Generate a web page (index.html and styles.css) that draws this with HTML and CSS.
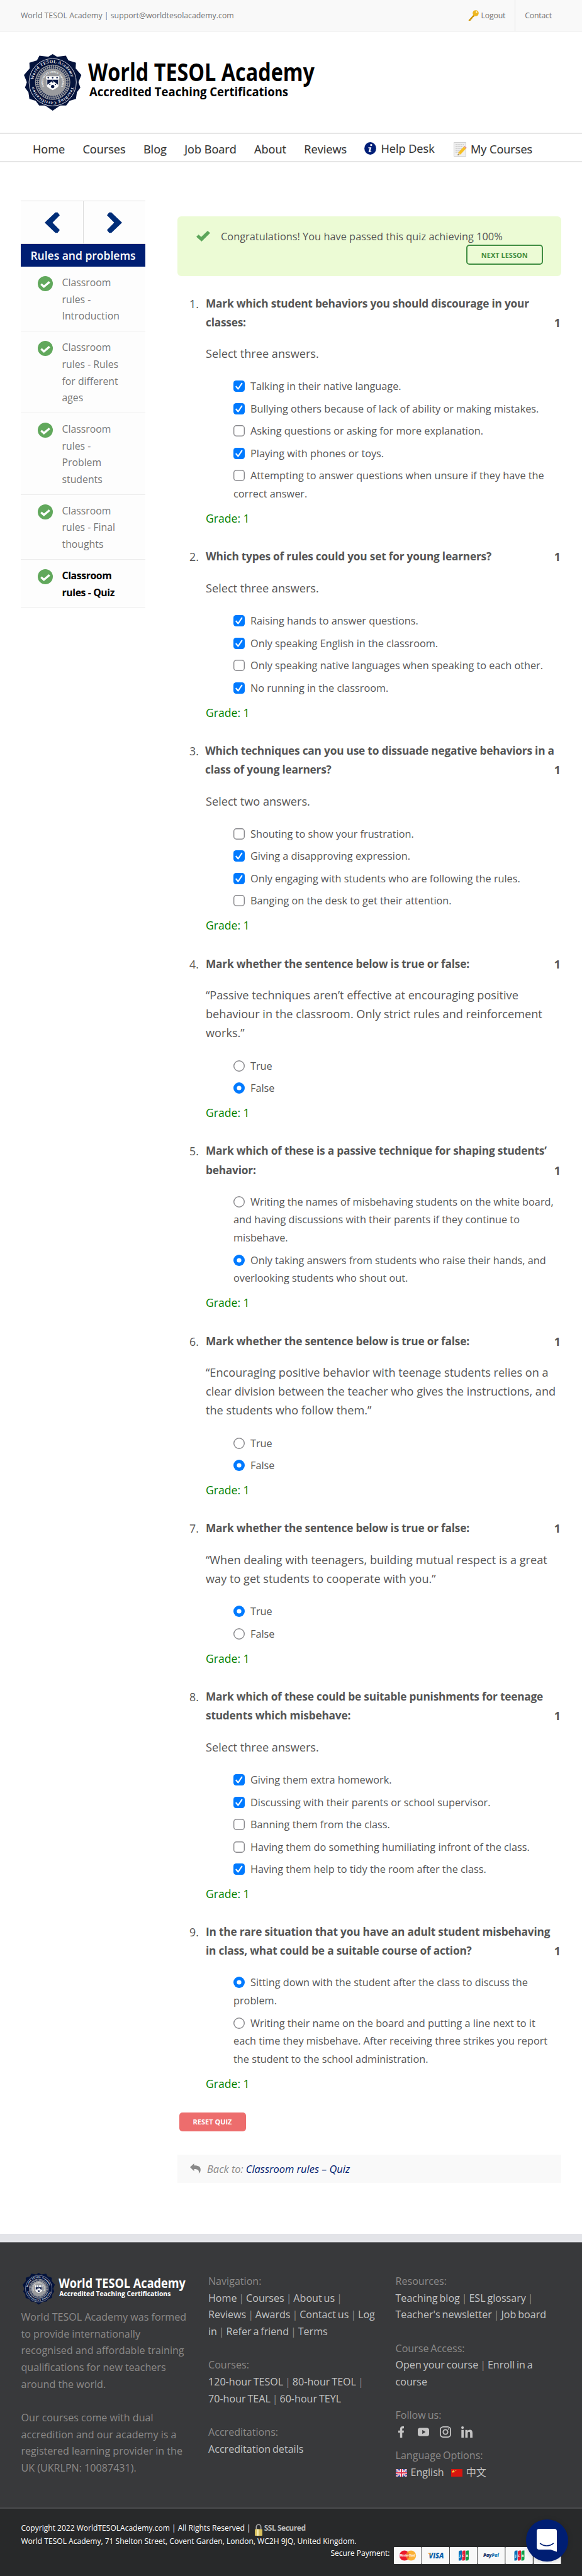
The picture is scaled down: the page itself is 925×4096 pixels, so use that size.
FILE: index.html
```html
<!DOCTYPE html>
<html lang="en">
<head>
<meta charset="utf-8">
<title>Classroom rules - Quiz</title>
<link rel="stylesheet" href="styles.css">
</head>
<body>
<svg class="defs" aria-hidden="true">
  <symbol id="on" viewBox="0 0 18 18"><rect width="18" height="18" rx="4.200" fill="#007aff"/><path d="M4.300 9.700l3.200 3.800L13.400 4.700" fill="none" stroke="#fff" stroke-width="2.100" stroke-linecap="round" stroke-linejoin="round"/></symbol>
  <symbol id="off" viewBox="0 0 18 18"><rect x=".7" y=".7" width="16.600" height="16.600" rx="4" fill="#fff" stroke="#89898d" stroke-width="1.400"/></symbol>
  <symbol id="ron" viewBox="0 0 18 18"><circle cx="9" cy="9" r="9" fill="#007aff"/><circle cx="9" cy="9" r="3.600" fill="#fff"/></symbol>
  <symbol id="roff" viewBox="0 0 18 18"><circle cx="9" cy="9" r="8.300" fill="#fff" stroke="#89898d" stroke-width="1.400"/></symbol>
  <symbol id="done" viewBox="0 0 24 24"><circle cx="12" cy="12" r="12" fill="#61a85c"/><path d="M5.300 12.800l4.500 4L18.700 9.300" fill="none" stroke="#fff" stroke-width="3.400"/></symbol>
</svg>

<div class="topbar">
  <span>World TESOL Academy | support@worldtesolacademy.com</span>
  <div class="toplinks">
    <a class="logout"><svg width="18" height="18" viewBox="0 0 18 18"><path d="M9.500 7.500L1.500 16.200l1 1 2.500-.4.500-2 1.800-.2.300-1.800 4.200-3.600z" fill="#cf9609"/><circle cx="13" cy="5" r="4.800" fill="#eeb720"/><circle cx="14.300" cy="3.300" r="1.200" fill="#fff6d8"/></svg>Logout</a>
    <a class="contact">Contact</a>
  </div>
</div>
<header class="brand">
  <svg class="logo" width="464" height="91" viewBox="0 0 464 91">
   <g id="logo">
    <g transform="translate(45.7 44.8)">
      <polygon fill="#04133c" points="0,-44.8 7,-40.5 21,-42.4 25,-34.8 37,-31 36.5,-22 45.6,-11.5 41,0 44,8.5 38.5,16 37,26.5 27,29.5 21.5,37 12,37 0,45.2 -12,37 -21.5,37 -27,29.5 -37,26.5 -38.5,16 -44,8.5 -41,0 -45.6,-11.5 -36.5,-22 -37,-31 -25,-34.8 -21,-42.4 -7,-40.5"/>
      <circle r="37.6" fill="none" stroke="#e8eaf0" stroke-width=".9"/>
      <circle r="28" fill="#9a9b9e"/>
      <circle r="24.2" fill="none" stroke="#17254d" stroke-width="5" stroke-dasharray="1.9 1.4"/>
      <circle r="24.2" fill="none" stroke="#9a9b9e" stroke-width=".9"/>
      <path id="ring" d="M0 30.8A30.8 30.8 0 0 1 0-30.8A30.8 30.8 0 0 1 0 30.8" fill="none"/>
      <path id="ring2" d="M0 15.2A15.2 15.2 0 0 1 0-15.2A15.2 15.2 0 0 1 0 15.2" fill="none"/>
      <text class="seal" transform="rotate(-4)"><textPath href="#ring" startOffset="50%" text-anchor="middle" textLength="84">World TESOL Academy</textPath></text>
      <text class="seal" transform="rotate(180)"><textPath href="#ring" startOffset="50%" text-anchor="middle" textLength="82">Teaching Certification</textPath></text>
      <text class="motto"><textPath href="#ring2" startOffset="50%" text-anchor="middle" textLength="62">SAPIENTIA ET VIRTUS · SAPIENTIA</textPath></text>
      <path d="M-10.500-9.600h21V-5h-1V3C9.500 8 4 10.500 0 12.500C-4 10.500-9.500 8-9.500 3V-5h-1z" fill="#fff"/>
      <path d="M-8.500-4h17v1.600L0-2.400L-8.500 4zM8.500-3.500V4L0-2.500z" fill="#0b1a45"/>
      <path d="M-8.500 7L0 0L8.500 7" fill="none" stroke="#fff" stroke-width="3.600"/>
      <circle cy="6.800" r="2.700" fill="#0b1a45"/>
      <circle cy="-.500" r="1.200" fill="#0b1a45"/><circle cx="-4.500" cy="3.400" r="1" fill="#0b1a45"/><circle cx="4.500" cy="3.400" r="1" fill="#0b1a45"/>
      <g fill="#0b1a45"><circle cx="-7" cy="-7.300" r="1.200"/><circle cy="-7.300" r="1.200"/><circle cx="7" cy="-7.300" r="1.200"/></g>
    </g>
    <text class="logo-title" x="102" y="43" textLength="360" lengthAdjust="spacingAndGlyphs">World TESOL Academy</text>
    <text class="logo-sub" x="104" y="66.500" textLength="316" lengthAdjust="spacingAndGlyphs">Accredited Teaching Certifications</text>
   </g>
  </svg>
</header>
<nav class="menu">
  <a>Home</a><a>Courses</a><a>Blog</a><a>Job Board</a><a>About</a><a>Reviews</a>
  <a class="help"><svg width="19" height="20" viewBox="0 0 19 20"><ellipse cx="9.500" cy="10" rx="9.400" ry="9.900" fill="#001f78"/><circle cx="10.900" cy="4.600" r="1.700" fill="#fff"/><path d="M6.500 8.200h4.800L9.500 14.500h1.900l-.4 1.300H6.600l1.900-6.300H6.200z" fill="#fff"/></svg>Help Desk</a>
  <a class="mine"><svg width="21" height="23" viewBox="0 0 21 23"><path d="M.5.500h19v22H.5z" fill="#efefef" stroke="#cfcfcf"/><path d="M3 4h13M3 7h12M3 10h10M3 13h8M3 16h5" stroke="#a8a8a8" stroke-width=".8" stroke-dasharray="2 1"/><path d="M6.500 21l1-4.500L16 7.300l3.500 3L11 19.500z" fill="#f6c026"/><path d="M16 7.300l1.300-1.300 3.500 3-1.300 1.300z" fill="#e89089"/><path d="M6.500 21l1-4.500 3.500 3z" fill="#ead2a2"/><path d="M6.500 21l.4-1.900 1.500 1.200z" fill="#333"/></svg>My Courses</a>
</nav>

<main class="main">
  <aside class="side">
    <div class="pager">
      <a><svg width="24" height="34" viewBox="0 0 24 34"><path d="M0 17L17 .8h3.500L24 5.200 12.500 17 24 28.800l-3.500 4.400H17z" fill="#002d78"/></svg></a>
      <a><svg width="24" height="34" viewBox="0 0 24 34"><path d="M24 17L7 .8H3.500L0 5.200 11.500 17 0 28.800l3.500 4.400H7z" fill="#002d78"/></svg></a>
    </div>
    <h2 class="side-title">Rules and problems</h2>
    <ul class="lessons">
      <li><svg width="24" height="24"><use href="#done"/></svg><span>Classroom<br>rules -<br>Introduction</span></li>
      <li><svg width="24" height="24"><use href="#done"/></svg><span>Classroom<br>rules - Rules<br>for different<br>ages</span></li>
      <li><svg width="24" height="24"><use href="#done"/></svg><span>Classroom<br>rules -<br>Problem<br>students</span></li>
      <li><svg width="24" height="24"><use href="#done"/></svg><span>Classroom<br>rules - Final<br>thoughts</span></li>
      <li class="current"><svg width="24" height="24"><use href="#done"/></svg><span>Classroom<br>rules - Quiz</span></li>
    </ul>
  </aside>

  <section class="content">
    <div class="notice">
      <svg width="22" height="17" viewBox="0 0 22 17"><path d="M0 9.500L3.600 6l4.200 3.800L18 0l4 3.500L8.400 17z" fill="#5ca65a"/></svg>
      <p>Congratulations! You have passed this quiz achieving 100%</p>
      <a class="next">NEXT LESSON</a>
    </div>
    <ol class="quiz">
      <li><div class="q"><b class="n">1.</b><h3>Mark which student behaviors you should discourage in your<br>classes:</h3><b>1</b></div>
        <p class="text">Select three answers.</p>
        <ul class="opts">
          <li><svg><use href="#on"/></svg>Talking in their native language.</li>
          <li><svg><use href="#on"/></svg>Bullying others because of lack of ability or making mistakes.</li>
          <li><svg><use href="#off"/></svg>Asking questions or asking for more explanation.</li>
          <li><svg><use href="#on"/></svg>Playing with phones or toys.</li>
          <li><svg><use href="#off"/></svg>Attempting to answer questions when unsure if they have the<br>correct answer.</li>
        </ul><p class="grade">Grade: 1</p></li>
      <li><div class="q"><b class="n">2.</b><h3>Which types of rules could you set for young learners?</h3><b>1</b></div>
        <p class="text">Select three answers.</p>
        <ul class="opts">
          <li><svg><use href="#on"/></svg>Raising hands to answer questions.</li>
          <li><svg><use href="#on"/></svg>Only speaking English in the classroom.</li>
          <li><svg><use href="#off"/></svg>Only speaking native languages when speaking to each other.</li>
          <li><svg><use href="#on"/></svg>No running in the classroom.</li>
        </ul><p class="grade">Grade: 1</p></li>
      <li><div class="q"><b class="n">3.</b><h3>Which techniques can you use to dissuade negative behaviors in a<br>class of young learners?</h3><b>1</b></div>
        <p class="text">Select two answers.</p>
        <ul class="opts">
          <li><svg><use href="#off"/></svg>Shouting to show your frustration.</li>
          <li><svg><use href="#on"/></svg>Giving a disapproving expression.</li>
          <li><svg><use href="#on"/></svg>Only engaging with students who are following the rules.</li>
          <li><svg><use href="#off"/></svg>Banging on the desk to get their attention.</li>
        </ul><p class="grade">Grade: 1</p></li>
      <li><div class="q"><b class="n">4.</b><h3>Mark whether the sentence below is true or false:</h3><b>1</b></div>
        <p class="text">“Passive techniques aren’t effective at encouraging positive<br>behaviour in the classroom. Only strict rules and reinforcement<br>works.”</p>
        <ul class="opts">
          <li><svg><use href="#roff"/></svg>True</li>
          <li><svg><use href="#ron"/></svg>False</li>
        </ul><p class="grade">Grade: 1</p></li>
      <li><div class="q"><b class="n">5.</b><h3>Mark which of these is a passive technique for shaping students’<br>behavior:</h3><b>1</b></div>
        <ul class="opts">
          <li><svg><use href="#roff"/></svg>Writing the names of misbehaving students on the white board,<br>and having discussions with their parents if they continue to<br>misbehave.</li>
          <li><svg><use href="#ron"/></svg>Only taking answers from students who raise their hands, and<br>overlooking students who shout out.</li>
        </ul><p class="grade">Grade: 1</p></li>
      <li><div class="q"><b class="n">6.</b><h3>Mark whether the sentence below is true or false:</h3><b>1</b></div>
        <p class="text">“Encouraging positive behavior with teenage students relies on a<br>clear division between the teacher who gives the instructions, and<br>the students who follow them.”</p>
        <ul class="opts">
          <li><svg><use href="#roff"/></svg>True</li>
          <li><svg><use href="#ron"/></svg>False</li>
        </ul><p class="grade">Grade: 1</p></li>
      <li><div class="q"><b class="n">7.</b><h3>Mark whether the sentence below is true or false:</h3><b>1</b></div>
        <p class="text">“When dealing with teenagers, building mutual respect is a great<br>way to get students to cooperate with you.”</p>
        <ul class="opts">
          <li><svg><use href="#ron"/></svg>True</li>
          <li><svg><use href="#roff"/></svg>False</li>
        </ul><p class="grade">Grade: 1</p></li>
      <li><div class="q"><b class="n">8.</b><h3>Mark which of these could be suitable punishments for teenage<br>students which misbehave:</h3><b>1</b></div>
        <p class="text">Select three answers.</p>
        <ul class="opts">
          <li><svg><use href="#on"/></svg>Giving them extra homework.</li>
          <li><svg><use href="#on"/></svg>Discussing with their parents or school supervisor.</li>
          <li><svg><use href="#off"/></svg>Banning them from the class.</li>
          <li><svg><use href="#off"/></svg>Having them do something humiliating infront of the class.</li>
          <li><svg><use href="#on"/></svg>Having them help to tidy the room after the class.</li>
        </ul><p class="grade">Grade: 1</p></li>
      <li><div class="q"><b class="n">9.</b><h3>In the rare situation that you have an adult student misbehaving<br>in class, what could be a suitable course of action?</h3><b>1</b></div>
        <ul class="opts">
          <li><svg><use href="#ron"/></svg>Sitting down with the student after the class to discuss the<br>problem.</li>
          <li><svg><use href="#roff"/></svg>Writing their name on the board and putting a line next to it<br>each time they misbehave. After receiving three strikes you report<br>the student to the school administration.</li>
        </ul><p class="grade">Grade: 1</p></li>
    </ol>
    <a class="reset">RESET QUIZ</a>
    <div class="back"><svg width="17" height="16" viewBox="0 0 17 16"><path d="M0 6L6.500 0v3.200C13 3 17 5 16.800 10c0 2.500-1 4.500-3 6 1-4.500-.5-7-7.300-7v3.200z" fill="#8a8a8a"/></svg><span>Back to:</span><a>Classroom rules – Quiz</a></div>
  </section>
</main>

<footer class="footer">
  <div class="cols">
    <div class="col about">
      <svg class="logo" width="260" height="51" viewBox="0 0 464 91"><use href="#logo"/></svg>
      <p>World TESOL Academy was formed<br>to provide internationally<br>recognised and affordable training<br>qualifications for new teachers<br>around the world.</p>
      <p>Our courses come with dual<br>accredition and our academy is a<br>registered learning provider in the<br>UK (UKRLPN: 10087431).</p>
    </div>
    <div class="col links">
      <p>Navigation:<br><a>Home</a> | <a>Courses</a> | <a>About us</a> |<br><a>Reviews</a> | <a>Awards</a> | <a>Contact us</a> | <a>Log</a><br><a>in</a> | <a>Refer a friend</a> | <a>Terms</a></p>
      <p>Courses:<br><a>120-hour TESOL</a> | <a>80-hour TEOL</a> |<br><a>70-hour TEAL</a> | <a>60-hour TEYL</a></p>
      <p>Accreditations:<br><a>Accreditation details</a></p>
    </div>
    <div class="col links">
      <p>Resources:<br><a>Teaching blog</a> | <a>ESL glossary</a> |<br><a>Teacher's newsletter</a> | <a>Job board</a></p>
      <p>Course Access:<br><a>Open your course</a> | <a>Enroll in a<br>course</a></p>
      <p class="follow">Follow us:</p>
      <div class="social">
        <svg viewBox="0 0 18 18"><path d="M5.800 18V10H3V6.700h2.800V4.500C5.800 1.500 7.300 0 10 0h2v3.200h-1.500C9.500 3.200 9.300 3.700 9.300 4.600v2.100h2.700L11.600 10H9.300v8z" fill="#c4c4c4"/></svg>
        <svg viewBox="0 0 18 18"><rect y="2.500" width="18" height="13" rx="3.500" fill="#c4c4c4"/><path d="M7.200 5.800v6.400L12.300 9z" fill="#38393b"/></svg>
        <svg viewBox="0 0 18 18"><rect x=".9" y=".9" width="16.200" height="16.200" rx="4.500" fill="none" stroke="#c4c4c4" stroke-width="1.800"/><circle cx="9" cy="9" r="3.700" fill="none" stroke="#c4c4c4" stroke-width="1.800"/><circle cx="13.700" cy="4.300" r="1.100" fill="#c4c4c4"/></svg>
        <svg viewBox="0 0 18 18"><circle cx="2.100" cy="2.100" r="2.100" fill="#c4c4c4"/><path d="M.3 5.800H4V18H.3zM6.500 5.800h3.600v1.700c.5-1 1.700-2 3.700-2 3.300 0 4.200 2.200 4.200 5.500v7h-3.800v-6.300c0-1.800-.3-3-1.900-3-1.500 0-2 1-2 3V18H6.500z" fill="#c4c4c4"/></svg>
      </div>
      <p class="lang">Language Options:<br><svg width="18" height="12" viewBox="0 0 18 12"><path fill="#3c50a5" d="M0 0h18v12H0z"/><path d="M0 0l18 12M18 0L0 12" stroke="#f0eef5" stroke-width="2.600"/><path d="M0 0l18 12M18 0L0 12" stroke="#e0637a" stroke-width="1"/><path d="M9 0v12M0 6h18" stroke="#fff" stroke-width="4"/><path d="M9 0v12M0 6h18" stroke="#dc3550" stroke-width="2.200"/></svg><a class="en">English</a><svg width="18" height="12" viewBox="0 0 18 12"><path fill="#d8150f" d="M0 0h18v12H0z"/><path d="M3.500 1.200l.8 1.600 1.700.2-1.200 1.200.3 1.800-1.600-.9-1.600.9.300-1.800L1 3l1.700-.2z" fill="#f8c93c"/><circle cx="7.500" cy="2.500" r=".8" fill="#f8c93c"/></svg><a class="zh">中文</a></p>
    </div>
  </div>
  <div class="legal">
    <p>Copyright 2022 WorldTESOLAcademy.com | All Rights Reserved | <svg class="lock" width="12" height="19" viewBox="0 0 12 19"><path d="M2.300 9V5a3.700 3.700 0 0 1 7.400 0v4" fill="none" stroke="#a9a9a9" stroke-width="1.600"/><rect y="8.500" width="12" height="10.500" rx="1" fill="#d6bf5c"/><path d="M3 8.500h3v10.500H3z" fill="#f4ebb4"/></svg><b>SSL Secured</b></p>
    <p>World TESOL Academy, 71 Shelton Street, Covent Garden, London, WC2H 9JQ, United Kingdom.</p>
    <div class="pay"><span>Secure Payment:</span>
      <svg width="266" height="27" viewBox="0 0 266 27">
        <g fill="#f8f8f8"><rect width="43.600" height="27" rx="1"/><rect x="44.400" width="43.600" height="27" rx="1"/><rect x="88.800" width="43.400" height="27" rx="1"/><rect x="133" width="43.500" height="27" rx="1"/><rect x="177.300" width="43.500" height="27" rx="1"/><rect x="222" width="43.600" height="27" rx="1"/></g>
        <circle cx="16.800" cy="13.500" r="8" fill="#eb1c2d"/><circle cx="27.200" cy="13.500" r="8" fill="#fbb034"/><path d="M22 7.400a8 8 0 0 1 0 12.200a8 8 0 0 1 0-12.200z" fill="#f26f26"/>
        <text class="mc" x="9" y="15.400" textLength="25">MasterCard</text>
        <text class="visa" x="55.500" y="17.500" textLength="24" lengthAdjust="spacingAndGlyphs">VISA</text><path d="M53.500 9.400h4.300l1.700 4.500z" fill="#f2a33a"/>
        <g id="jcb" transform="translate(103 5.600)"><path d="M3 0h2v13a3 3 0 0 1-3 3H0V3a3 3 0 0 1 3-3z" fill="#0b70b8"/><path d="M8.500 0h2v13a3 3 0 0 1-3 3h-2V3a3 3 0 0 1 3-3z" fill="#e4203a"/><path d="M14 0h2v13a3 3 0 0 1-3 3h-2V3a3 3 0 0 1 3-3z" fill="#11a04a"/><text class="jcb" x="1.200" y="10" textLength="14">JCB</text></g>
        <use href="#jcb" x="88.500"/>
        <text class="pp" x="142" y="16" textLength="25" lengthAdjust="spacingAndGlyphs">Pay<tspan fill="#2b7fb8">Pal</tspan></text>
      </svg>
    </div>
    <a class="chat"><svg width="32" height="37" viewBox="0 0 32 37"><path d="M4 0h24a4 4 0 0 1 4 4v32.500L22 33H4a4 4 0 0 1-4-4V4a4 4 0 0 1 4-4z" fill="#fff"/><path d="M5.500 23.200c6 5 15 5 21 0" fill="none" stroke="#001e73" stroke-width="1.500" stroke-linecap="round"/></svg></a>
  </div>
</footer>
</body>
</html>
```

FILE: styles.css
```css
* { box-sizing: border-box; }
body { margin: 0; width: 925px; background: #fff; color: #555; font-family: "Open Sans", "Noto Sans", sans-serif; white-space: nowrap; overflow-x: hidden; }
p, h2, h3, ul, ol { margin: 0; padding: 0; list-style: none; font-size: inherit; }
svg { display: block; flex: none; }
.defs { position: absolute; width: 0; height: 0; }

.logo { overflow: visible; }
.seal { font: bold 7px "Liberation Serif", serif; fill: #e8eaf0; }
.motto { font: bold 4px "Liberation Serif", serif; fill: #fff; }
.logo-title { font-size: 38.800px; font-weight: 700; fill: currentColor; }
.logo-sub { font-size: 20.400px; font-weight: 700; fill: currentColor; }
.jcb { font-size: 5.500px; font-weight: 700; fill: #fff; }
.mc { font-size: 5px; font-weight: 700; font-style: italic; fill: #fff; }
.visa { font-size: 12px; font-weight: 800; font-style: italic; fill: #0a62ad; }
.pp { font-size: 8px; font-weight: 800; font-style: italic; fill: #1c3668; }

.topbar { height: 50px; display: flex; justify-content: space-between; background: #f9f9f9; border-bottom: 1px solid #e3e3e3; padding: 0 33px; font-size: 12.300px; line-height: 49px; color: #747474; }
.toplinks { display: flex; }
.logout { display: flex; align-items: center; gap: 4px; padding-right: 15px; border-right: 1px solid #e3e3e3; letter-spacing: -.2px; }
.contact { padding: 0 15px; letter-spacing: -.2px; }

.brand { height: 161px; padding: 35.500px 0 0 37.500px; color: #000; }
.menu { height: 47px; border-top: 2px solid #e6e6e6; border-bottom: 2px solid #e6e6e6; display: flex; align-items: center; gap: 28.300px; padding: 5px 0 0 52px; font-size: 18.100px; font-weight: 500; -webkit-text-stroke: .2px #333; color: #333; line-height: 24px; }
.menu a { display: flex; align-items: center; }
.help { gap: 7px; position: relative; top: -1px; }
.mine { gap: 6px; margin-left: 2px; }

.main { height: 3294px; display: flex; align-items: flex-start; padding-left: 33px; }
.side { width: 198px; margin-top: 61px; border-top: 1px solid #ddd; background: #fdfdfd; }
.pager { height: 68px; display: grid; grid-template-columns: 99px 99px; border-bottom: 1px solid #ddd; }
.pager a { display: flex; align-items: center; padding-left: 38px; }
.pager a + a { border-left: 1px solid #ddd; padding-left: 37px; }
.side-title { height: 36px; background: #001e73; color: #fff; font-size: 17.500px; font-weight: 600; line-height: 36px; text-align: center; }
.lessons li { display: flex; gap: 15px; padding: 12px 0 10px 26.500px; border-bottom: 1px solid #ececec; font-size: 15.800px; line-height: 26.700px; color: #777; }
.lessons svg { margin-top: 3px; }
.lessons .current { color: #000; font-weight: 700; letter-spacing: -.4px; }

.content { width: 610px; margin: 86px 0 0 51px; }
.notice { height: 95px; border-radius: 6px; background: #ecfbd5; display: grid; grid-template-columns: 22px 1fr; column-gap: 17px; grid-template-rows: 45px 32px; padding: 0 29.500px 0 30px; font-size: 16.370px; }
.notice svg { margin-top: 23px; }
.notice p { line-height: 20px; padding-top: 22px; }
.next { grid-column: 2; justify-self: end; width: 121.500px; height: 32px; border: 2px solid #3f8d42; border-radius: 5px; color: #3f8d42; font-size: 11px; font-weight: 700; line-height: 29px; text-align: center; }

.quiz { margin-top: 28.500px; font-size: 18.150px; line-height: 30.100px; }
.quiz > li { margin-bottom: 31.350px; }
.q { display: flex; align-items: flex-end; padding-right: 1px; }
.q h3 { flex: 1; font-size: 17.300px; font-weight: 700; letter-spacing: -.21px; }
.q b { font-size: 17.800px; }
.q .n { width: 45px; padding-left: 19px; align-self: flex-start; font-weight: 400; }
.text { margin: 19.400px 0 23.300px 45px; }
.opts { margin: 20.900px 0 0 89px; font-size: 16.280px; line-height: 28.800px; }
.text + .opts { margin-top: 0; }
.opts li { margin-bottom: 6.700px; }
.opts svg { display: inline-block; width: 18px; height: 18px; margin-right: 9px; vertical-align: -3px; }
.grade { margin: 9px 0 0 45px; font-size: 17.600px; color: green; }

.reset { display: block; width: 106px; height: 30px; margin: 4.500px 0 36.500px 2.500px; background: #ed6d6d; border-radius: 5px; color: #fff; font-size: 11px; font-weight: 700; line-height: 30px; text-align: center; }
.back { height: 45px; display: flex; align-items: center; padding-left: 20px; background: #f9f9f9; color: #8a8a8a; font-size: 16.450px; font-style: italic; }
.back span { margin: 0 4px 0 10px; }
.back a { color: #00206e; }

.footer { border-top: 13px solid #e3e4e8; background: #38393b; color: #8c8a89; font-size: 16.100px; line-height: 26.650px; }
.cols { height: 422px; display: grid; grid-template-columns: 297.500px 297.500px 1fr; padding: 48px 0 0 33.500px; border-top: 1px solid #77787b; }
.col p { margin-bottom: 26.650px; }
.links { word-spacing: -1.300px; }
.about .logo { color: #fff; margin: 0 0 6px 2px; }
.cols a { color: #c4c4c4; }
.col .follow { margin-bottom: 4px; }
.social { display: flex; gap: 15px; padding-left: 1px; margin-bottom: 15px; }
.social svg { width: 18px; height: 18px; margin-right: 1.500px; }
.lang svg { display: inline-block; vertical-align: -1px; }
.en { margin: 0 11px 0 6px; }
.zh { margin-left: 6px; font-family: "Open Sans", "Noto Sans CJK SC", sans-serif; }
.legal { position: relative; height: 109px; background: #28292a; border-top: 2px solid #4a4b4d; padding: 19.500px 33.500px 0; color: #fff; font-size: 12.050px; line-height: 21.300px; }
.lock { display: inline-block; margin: -4px 3px -4px 3px; vertical-align: -4px; }
.legal b { color: #bbb; letter-spacing: -.5px; }
.pay { display: flex; justify-content: flex-end; gap: 6px; margin-top: -1px; }
.pay span { line-height: 20px; }
.chat { position: absolute; left: 836px; top: 17px; width: 66.500px; height: 66.500px; border-radius: 50%; background: #001e73; box-shadow: 0 1px 9px rgba(0,0,0,.15); display: flex; align-items: center; justify-content: center; }
```
